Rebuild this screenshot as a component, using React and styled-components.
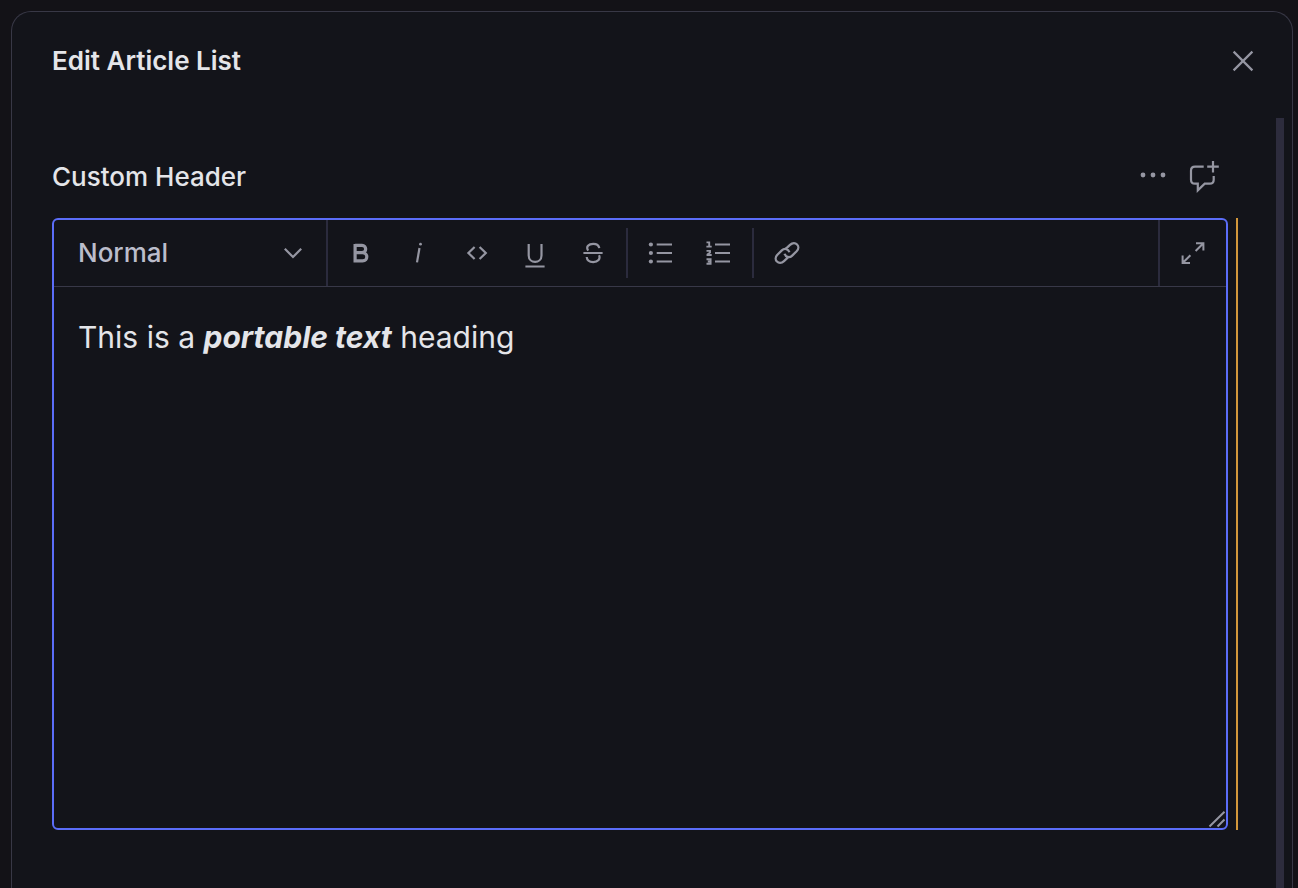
import React from "react";
import styled, { createGlobalStyle } from "styled-components";

const GlobalStyle = createGlobalStyle`
  *, *::before, *::after { box-sizing: border-box; }
  body {
    margin: 0;
    background: #131217;
    color: #e4e5e9;
    font-family: Inter, "Liberation Sans", sans-serif;
    -webkit-font-smoothing: antialiased;
  }
`;

const Page = styled.div`
  display: flex;
  min-height: 100vh;
  padding: 11px 5px 0 11px;
`;

const Dialog = styled.section`
  display: flex;
  flex: 1;
  flex-direction: column;
  min-width: 0;
  border: 1px solid #383846;
  border-bottom: 0;
  border-radius: 20px 20px 0 0;
  background: #13141a;
`;

const DialogHeader = styled.header`
  display: flex;
  align-items: center;
  justify-content: space-between;
  padding: 24px 24px 24px 40px;
`;

const Title = styled.h1`
  margin: 0;
  font-size: 26px;
  font-weight: 600;
  line-height: 32px;
`;

const DialogBody = styled.div`
  display: flex;
  flex: 1;
`;

const Content = styled.main`
  flex: 1;
  min-width: 0;
  padding: 40px 38px 40px 40px;
`;

const ScrollTrack = styled.div`
  width: 8px;
  margin: 8px 8px 0 0;
  background: #2d2c3d;
`;

const FieldHeader = styled.div`
  display: flex;
  align-items: center;
  justify-content: space-between;
  padding-right: 10px;
  margin-bottom: 18px;
`;

const FieldTitle = styled.h2`
  margin: 0;
  padding-top: 4px;
  font-size: 26px;
  font-weight: 500;
  line-height: 32px;
`;

const Actions = styled.div`
  display: flex;
`;

const IconButton = styled.button`
  display: block;
  flex: none;
  width: 50px;
  height: 50px;
  padding: 0;
  border: 0;
  border-radius: 6px;
  background: transparent;
  color: #9596a2;
  cursor: pointer;

  &:hover { background: #1e1f29; }
`;

const Glyph = styled.svg`
  display: block;
  fill: none;
  stroke: currentColor;
  stroke-width: ${(p) => p.$weight || 2.2};
`;

const FieldRow = styled.div`
  display: flex;
  gap: 8px;
`;

const ChangeBar = styled.div`
  width: 2px;
  background: #d3973b;
`;

const Editor = styled.div`
  position: relative;
  display: flex;
  flex: 1;
  flex-direction: column;
  min-width: 0;
  min-height: 612px;
  border: 2px solid #5b6df8;
  border-radius: 6px;
`;

const Toolbar = styled.div`
  display: flex;
  border-bottom: 1px solid #383848;
`;

const StyleField = styled.label`
  display: grid;
  align-items: center;
  width: 274px;
  border-right: 2px solid #2b2b3d;
  color: #9596a2;

  > * { grid-area: 1 / 1; }
`;

const StyleSelect = styled.select`
  width: 100%;
  height: 66px;
  padding: 0 24px 2px;
  border: 0;
  outline: 0;
  appearance: none;
  background: transparent;
  color: #bbbdcb;
  font-family: inherit;
  font-size: 26px;
  font-weight: 500;
  cursor: pointer;
`;

const SelectArrow = styled.span`
  justify-self: end;
  padding-right: 8px;
  pointer-events: none;
`;

const ToolGroup = styled.div`
  display: flex;
  flex: ${(p) => (p.$grow ? 1 : "none")};
  gap: 8px;
  padding: 8px;
  border-left: ${(p) => (p.$divided ? "2px solid #2b2b3d" : "0")};
`;

const Divider = styled.span`
  width: 2px;
  background: #2b2b3d;
`;

const TextArea = styled.div`
  flex: 1;
  padding: 32px 24px;
  outline: 0;
  font-size: 30px;
  line-height: 36px;

  p { margin: 0; }
`;

const ResizeHandle = styled.span`
  position: absolute;
  right: 0;
  bottom: 0;
  color: #9596a2;
  cursor: ns-resize;
`;

const Icon = ({ children, weight }) => (
  <Glyph width="50" height="50" viewBox="0 0 50 50" $weight={weight} aria-hidden="true">
    {children}
  </Glyph>
);

const marks = [
  {
    label: "Bold",
    weight: 3.2,
    icon: <path d="M19.1 17.4H26C30.9 17.4 30.9 24.7 26 24.7H19.1M26 24.7H26.6C32.2 24.7 32.2 32.9 26.6 32.9H19.1V16" />,
  },
  {
    label: "Italic",
    icon: (
      <>
        <path d="M25.5 20L23 34.4" />
        <circle cx="26.5" cy="16.2" r="1.4" fill="currentColor" stroke="none" />
      </>
    ),
  },
  { label: "Code", icon: <path d="M22.6 19L16.4 25L22.6 31M27.6 19L33.8 25L27.6 31" /> },
  { label: "Underline", icon: <path d="M18.7 16V27.4C18.7 36 31.5 36 31.5 27.4V16M15.4 38.5H34.6" /> },
  {
    label: "Strike",
    icon: <path d="M15.4 25H34.6M20.2 22.6C17.6 18.9 20.6 15.8 25.2 15.8C28.6 15.8 30.9 17.6 31.3 20.2M18.7 29C19 32.3 21.6 34.1 25.2 34.1C30 34.1 32.7 30.8 31 27.2" />,
  },
];

const lists = [
  {
    label: "Bullet list",
    icon: (
      <>
        <path d="M20.7 16.5H36M20.7 25H36M20.7 33.5H36" />
        <g fill="currentColor" stroke="none">
          <circle cx="14.9" cy="16.5" r="2.1" />
          <circle cx="14.9" cy="25" r="2.1" />
          <circle cx="14.9" cy="33.5" r="2.1" />
        </g>
      </>
    ),
  },
  {
    label: "Numbered list",
    icon: (
      <>
        <path d="M21 16.5H36M21 25H36M21 33.5H36" />
        <path
          strokeWidth="1.9"
          d="M12.5 14.4H15.2V18.5M12.4 18.6H17.7M12.5 22.9H16V24.5L13.5 26.4V27H17.7M12.5 31.3H16.6V35.7H12.5M13.8 33.5H16.6"
        />
      </>
    ),
  },
];

const Tool = ({ label, icon, weight }) => (
  <IconButton type="button" aria-label={label}>
    <Icon weight={weight}>{icon}</Icon>
  </IconButton>
);

export default function App() {
  return (
    <>
      <GlobalStyle />
      <Page>
        <Dialog role="dialog" aria-labelledby="dialog-title">
          <DialogHeader>
            <Title id="dialog-title">Edit Article List</Title>
            <Tool label="Close" icon={<path d="M15.6 15.6L34.4 34.4M34.4 15.6L15.6 34.4" />} />
          </DialogHeader>
          <DialogBody>
            <Content>
              <FieldHeader>
                <FieldTitle id="field-title">Custom Header</FieldTitle>
                <Actions>
                  <Tool
                    label="Field actions"
                    icon={
                      <g fill="currentColor" stroke="none">
                        <circle cx="15" cy="25" r="2.4" />
                        <circle cx="25" cy="25" r="2.4" />
                        <circle cx="35" cy="25" r="2.4" />
                      </g>
                    }
                  />
                  <Tool
                    label="Add comment"
                    icon={
                      <path d="M25.7 16.7H17C14.5 16.7 13 18.2 13 20.7V29.7C13 32.2 14.5 33.7 17 33.7H19.8V40.4L26.7 33.7H31.7C34.2 33.7 35.7 32.2 35.7 29.7V26M35 11V22.5M29.2 16.7H40.8" />
                    }
                  />
                </Actions>
              </FieldHeader>
              <FieldRow>
                <Editor>
                  <Toolbar role="toolbar" aria-label="Formatting">
                    <StyleField>
                      <StyleSelect aria-label="Text style" defaultValue="normal">
                        <option value="normal">Normal</option>
                      </StyleSelect>
                      <SelectArrow>
                        <Icon>
                          <path d="M16.8 20.8L25 29L33.2 20.8" />
                        </Icon>
                      </SelectArrow>
                    </StyleField>
                    <ToolGroup $grow>
                      {marks.map((m) => (
                        <Tool key={m.label} {...m} />
                      ))}
                      <Divider />
                      {lists.map((l) => (
                        <Tool key={l.label} {...l} />
                      ))}
                      <Divider />
                      <Tool
                        label="Link"
                        weight={2.3}
                        icon={
                          <path d="M23.2 21.3L28 16.9C33.2 12.2 39.4 18.3 34.6 23.3L30.2 27.6C27.4 30.3 23.6 29.2 22.6 25.8M26.8 28.7L22 33.1C16.8 37.8 10.6 31.7 15.4 26.7L19.8 22.4C22.6 19.7 26.4 20.8 27.4 24.2" />
                        }
                      />
                    </ToolGroup>
                    <ToolGroup $divided>
                      <Tool
                        label="Expand editor"
                        weight={2}
                        icon={<path d="M28 15.2H35.4V22.6M35.4 15.2L27.6 23M14.6 27.6V35H22M14.6 35L22.4 27.2" />}
                      />
                    </ToolGroup>
                  </Toolbar>
                  <TextArea
                    role="textbox"
                    aria-multiline="true"
                    aria-labelledby="field-title"
                    contentEditable
                    suppressContentEditableWarning
                    spellCheck={false}
                  >
                    <p>
                      This is a <strong><em>portable text</em></strong> heading
                    </p>
                  </TextArea>
                  <ResizeHandle>
                    <Glyph width="18" height="18" viewBox="0 0 18 18" $weight={2} aria-hidden="true">
                      <path d="M1.5 16.5L16.5 1.8M9.5 16.5L16.5 9.5" />
                    </Glyph>
                  </ResizeHandle>
                </Editor>
                <ChangeBar />
              </FieldRow>
            </Content>
            <ScrollTrack />
          </DialogBody>
        </Dialog>
      </Page>
    </>
  );
}
